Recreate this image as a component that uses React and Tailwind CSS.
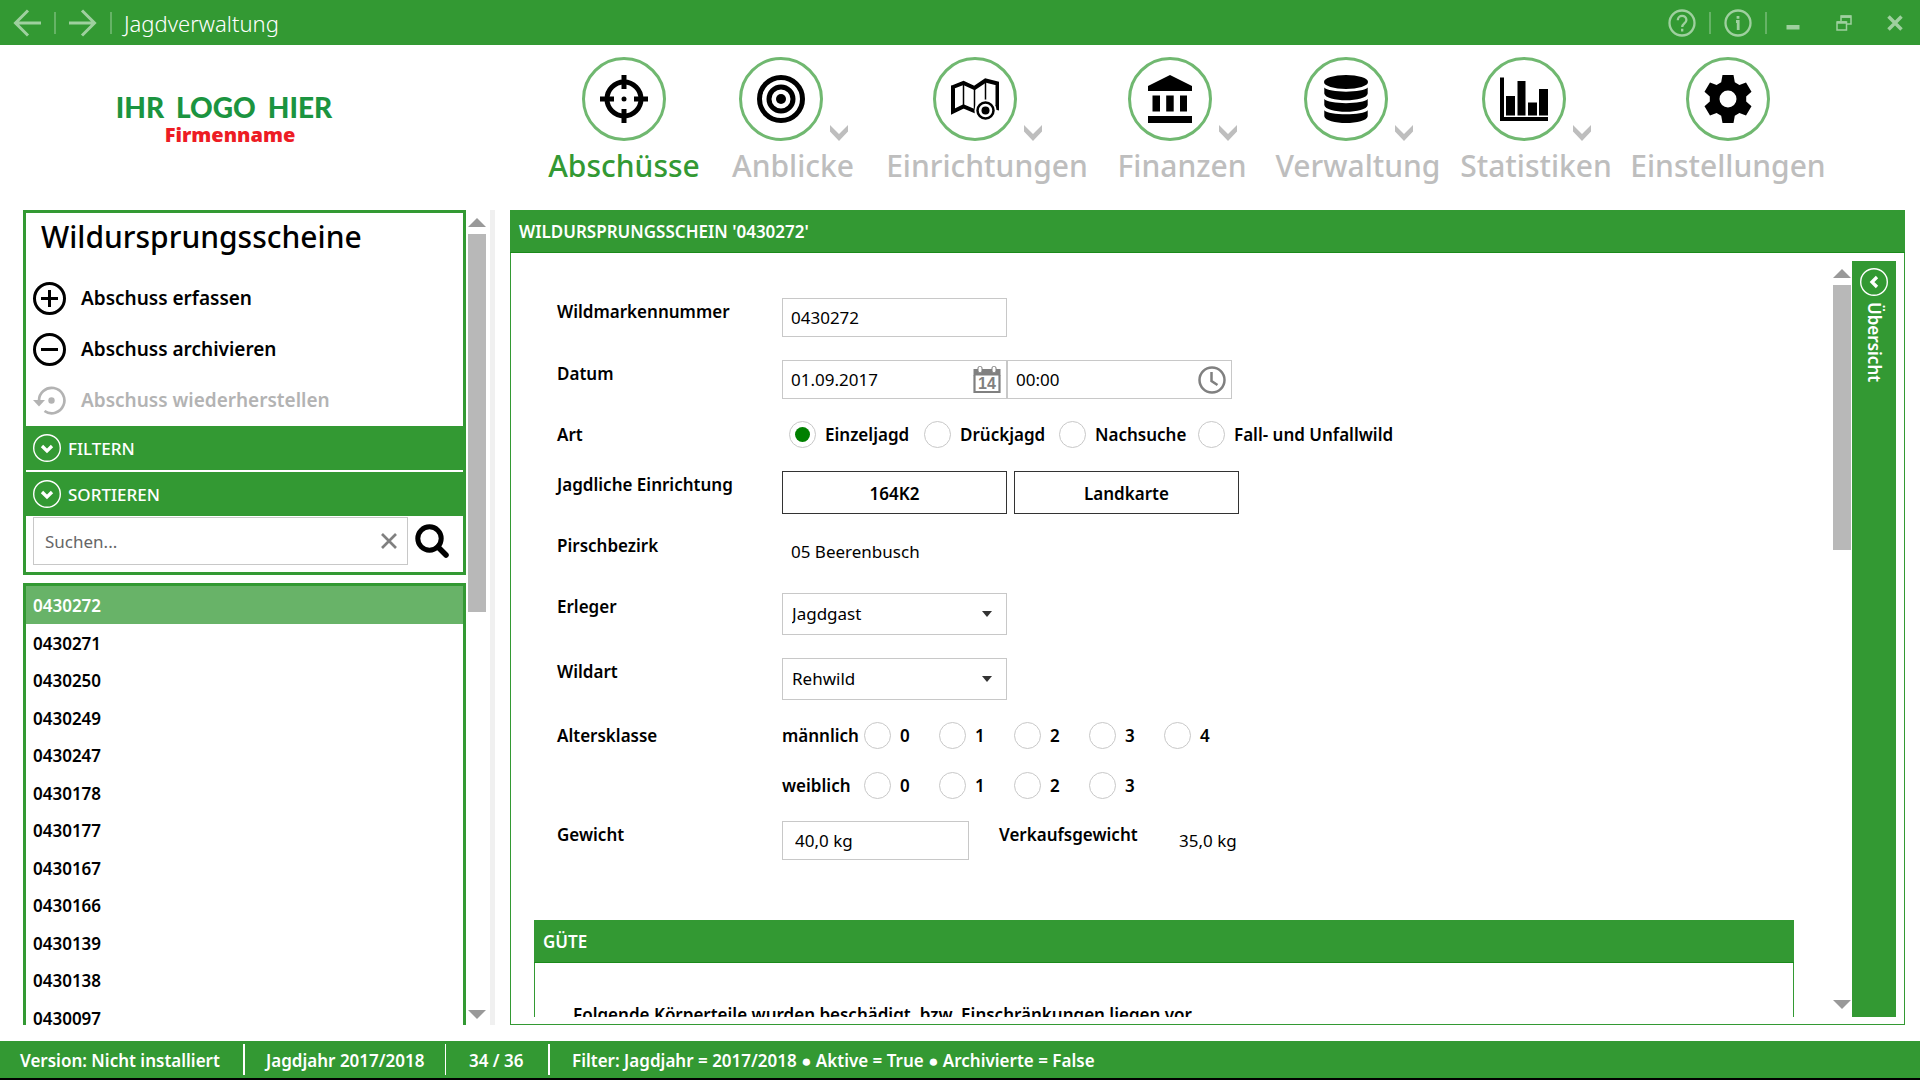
import React from "react";

const NAV = [
  { label: "Abschüsse", width: "w-[184px]", icon: "scope", active: true },
  { label: "Anblicke", width: "w-[154px]", icon: "target", menu: true },
  { label: "Einrichtungen", width: "w-[234px]", icon: "map", menu: true },
  { label: "Finanzen", width: "w-[156px]", icon: "bank", menu: true },
  { label: "Verwaltung", width: "w-[196px]", icon: "database", menu: true },
  { label: "Statistiken", width: "w-[160px]", icon: "chart", menu: true },
  { label: "Einstellungen", width: "w-[224px]", icon: "gear" },
];

const RECORDS = [
  "0430272", "0430271", "0430250", "0430249", "0430247", "0430178", "0430177",
  "0430167", "0430166", "0430139", "0430138", "0430097",
];

function NavIcon({ name }) {
  const box = { viewBox: "0 0 48 48", className: "size-12", "aria-hidden": true };
  switch (name) {
    case "scope":
      return (
        <svg {...box}>
          <circle cx="24" cy="24" r="17" fill="none" stroke="black" strokeWidth="5" />
          <path d="M24 0v14M24 34v14M0 24h14M34 24h14" stroke="black" strokeWidth="5" />
          <circle cx="24" cy="24" r="2.5" />
        </svg>
      );
    case "target":
      return (
        <svg {...box}>
          <circle cx="24" cy="24" r="21.5" fill="none" stroke="black" strokeWidth="5" />
          <circle cx="24" cy="24" r="12" fill="none" stroke="black" strokeWidth="5" />
          <circle cx="24" cy="24" r="5" />
        </svg>
      );
    case "map":
      return (
        <svg {...box}>
          <path d="M2 12L12.5 8 23.500 13 34.500 5.500 46.500 8.500V33L34.500 30 23.500 36 12.500 31.500 2 36.500Z" fill="none" stroke="black" strokeWidth="4" />
          <path d="M12.500 8v24M23.500 13v23M34.500 5v22" fill="none" stroke="black" strokeWidth="1.5" />
          <circle cx="34.5" cy="35.5" r="11" fill="white" />
          <circle cx="34.5" cy="35.5" r="8" fill="none" stroke="black" strokeWidth="2.5" />
          <circle cx="34.5" cy="35.5" r="4" />
        </svg>
      );
    case "bank":
      return (
        <svg {...box}>
          <path d="M2 11L24 0l22 11v5H2zM6.500 20.500h7.500v16H6.500zM20.200 20.500h7.500v16h-7.500zM34 20.500h7v16h-7zM2 41h44v7H2z" />
        </svg>
      );
    case "database":
      return (
        <svg {...box}>
          <ellipse cx="24" cy="7" rx="22" ry="7" />
          <path d="M2.300 12.500c4 5.500 39.400 5.500 43.400 0v6c-1 9-42.400 9-43.400 0zM2.300 24c4 5.500 39.400 5.500 43.400 0v6c-1 9-42.400 9-43.400 0zM2.300 35.200c4 5.500 39.400 5.500 43.400 0v6c-1 9-42.400 9-43.400 0z" />
        </svg>
      );
    case "chart":
      return (
        <svg {...box}>
          <path d="M0 2.500h4v39.500h44v4H0zM6 21h9v19.500H6zM17.500 6h8v34.500h-8zM28 27.500h9v13h-9zM39 14h9v26.500h-9z" />
        </svg>
      );
    default:
      return (
        <svg {...box}>
          <path
            fillRule="evenodd"
            d="M18.500 0h11l1.300 7.200 4.600 2.700 6.600-2.400 5.500 9.300-5.300 4.600v5.200l5.300 4.600-5.500 9.300-6.600-2.400-4.600 2.700L29.500 48h-11l-1.300-7.200-4.600-2.700L6 40.500.500 31.200l5.300-4.600v-5.200L.500 16.800 6 7.500l6.600 2.400 4.600-2.700zM24 15.500a8.500 8.500 0 1 0 0 17 8.500 8.500 0 0 0 0-17z"
          />
        </svg>
      );
  }
}

function TitleBar() {
  return (
    <header className="flex h-[45px] shrink-0 items-center bg-[#339933] text-[#9fd09f]">
      <button aria-label="Zurück" className="ml-[13px] size-7">
        <svg viewBox="0 0 28 28" fill="none" stroke="currentColor" strokeWidth="3">
          <path d="M28 14H3M15 1.500L2.500 14 15 26.500" />
        </svg>
      </button>
      <span className="ml-[13px] h-[22px] w-0.5 bg-[#66b366]" />
      <button aria-label="Vor" className="ml-[13px] size-7">
        <svg viewBox="0 0 28 28" fill="none" stroke="currentColor" strokeWidth="3">
          <path d="M0 14h25M13 1.500L25.500 14 13 26.500" />
        </svg>
      </button>
      <span className="ml-[13px] h-[22px] w-0.5 bg-[#66b366]" />
      <h1 className="ml-3 pt-0.5 text-[22px] font-light text-white">Jagdverwaltung</h1>
      <div className="ml-auto flex items-center">
        <button aria-label="Hilfe" className="size-7">
          <svg viewBox="0 0 28 28" fill="none" stroke="currentColor" strokeWidth="2.3">
            <circle cx="14" cy="14" r="12.5" />
            <path d="M9.800 11.200c0-5.600 8.600-5.600 8.600-.3 0 3.300-4.200 3.500-4.200 7M14.200 19.800v2.600" />
          </svg>
        </button>
        <span className="ml-[13px] h-[22px] w-0.5 bg-[#66b366]" />
        <button aria-label="Info" className="ml-[13px] size-7">
          <svg viewBox="0 0 28 28" fill="none" stroke="currentColor" strokeWidth="2.3">
            <circle cx="14" cy="14" r="12.5" />
            <path d="M12 12.500h2.200V21M14 7v2.800" strokeWidth="2.8" />
          </svg>
        </button>
        <span className="ml-[13px] h-[22px] w-0.5 bg-[#66b366]" />
        <button aria-label="Minimieren" className="ml-[10px] flex size-8 items-center justify-center">
          <svg viewBox="0 0 16 16" className="size-4" fill="currentColor"><path d="M1.500 10h13v4.500h-13z" /></svg>
        </button>
        <button aria-label="Wiederherstellen" className="ml-[19px] flex size-8 items-center justify-center">
          <svg viewBox="0 0 16 16" className="size-4" fill="none" stroke="currentColor" strokeWidth="1.5">
            <path d="M5 6V1h10v8h-5" />
            <path d="M5 1.700h10" strokeWidth="2.5" />
            <path d="M1 7h9.500v8H1z" />
            <path d="M1 7.500h9.500" strokeWidth="2.5" />
          </svg>
        </button>
        <button aria-label="Schließen" className="mr-[9px] ml-[19px] flex size-8 items-center justify-center">
          <svg viewBox="0 0 16 16" className="size-4" stroke="currentColor" strokeWidth="3.5">
            <path d="M1.500 1.500l13 13M14.500 1.500l-13 13" />
          </svg>
        </button>
      </div>
    </header>
  );
}

function MainNav() {
  return (
    <div className="flex h-[165px] shrink-0 justify-between">
      <div className="ml-[118px] flex w-[212px] flex-col items-center pt-[45px] whitespace-nowrap">
        <span className="flex gap-3 font-[Lato,sans-serif] text-[28px] leading-[34px] font-black text-[#1b9440]">
          <span>IHR</span>
          <span>LOGO</span>
          <span>HIER</span>
        </span>
        <span className="pl-3 font-['Open_Sans',sans-serif] text-[20px] leading-[22px] font-extrabold text-[#ed1c24]">Firmenname</span>
      </div>
      <nav className="mr-[80px] flex pt-3">
        {NAV.map((item) => (
          <button
            key={item.label}
            className={`flex flex-col items-center ${item.width} ${item.active ? "text-[#339933]" : "text-[#bebebe]"}`}
          >
            <span className="flex items-end">
              <span className="flex size-[84px] items-center justify-center rounded-full border-[3px] border-[#70b870]">
                <NavIcon name={item.icon} />
              </span>
              {item.menu && (
                <svg viewBox="0 0 18 16" className="ml-[7px] h-4 w-[18px]" fill="currentColor" aria-hidden="true">
                  <path d="M0 0l9 9 9-9v6.500L9 16 0 6.500z" />
                </svg>
              )}
            </span>
            <span className="mt-1 text-[30px] leading-[42px] font-medium">{item.label}</span>
          </button>
        ))}
      </nav>
    </div>
  );
}

function ScrollBar({ bottom, thumb }) {
  return (
    <div className="flex w-[18px] shrink-0 flex-col items-center" aria-hidden="true">
      <svg viewBox="0 0 18 9" className="mt-2 h-[9px] w-[18px]" fill="#999999"><path d="M9 0l9 9H0z" /></svg>
      <div className={`mt-[7px] w-full bg-[#b8b8b8] ${thumb}`} />
      <svg viewBox="0 0 18 9" className={`mt-auto h-[9px] w-[18px] ${bottom}`} fill="#999999"><path d="M0 0h18L9 9z" /></svg>
    </div>
  );
}

function CircleChevron({ left }) {
  return (
    <svg viewBox="0 0 28 28" className="size-7 shrink-0" fill="none" stroke="white" aria-hidden="true">
      <circle cx="14" cy="14" r="13.3" strokeWidth="1.4" />
      <path d={left ? "M17 9l-5 5 5 5" : "M9 12l5 5 5-5"} strokeWidth="3.3" />
    </svg>
  );
}

function Sidebar() {
  return (
    <aside className="flex w-[463px] shrink-0">
      <div className="flex min-w-0 flex-1 flex-col gap-2 overflow-hidden">
        <section className="shrink-0 border-[3px] border-[#339933] pb-[7px]">
          <h2 className="flex h-[60px] pl-[15px] text-[30px] leading-[48px] font-medium">Wildursprungsscheine</h2>
          <button className="flex h-[51px] w-full items-center gap-[15px] pl-[7px] text-[19px] font-semibold">
            <svg viewBox="0 0 33 33" className="size-[33px]" fill="none" stroke="black" strokeWidth="3">
              <circle cx="16.5" cy="16.5" r="15" />
              <path d="M8 16.500h17M16.500 8v17" />
            </svg>
            Abschuss erfassen
          </button>
          <button className="flex h-[51px] w-full items-center gap-[15px] pl-[7px] text-[19px] font-semibold">
            <svg viewBox="0 0 33 33" className="size-[33px]" fill="none" stroke="black" strokeWidth="3">
              <circle cx="16.5" cy="16.5" r="15" />
              <path d="M8 16.500h17" />
            </svg>
            Abschuss archivieren
          </button>
          <button disabled className="flex h-[51px] w-full items-center gap-[15px] pl-[7px] text-[19px] font-semibold text-[#b3b3b3]">
            <svg viewBox="0 0 33 33" className="size-[33px]" fill="none" stroke="currentColor" strokeWidth="2.7">
              <path d="M6 17A12.700 12.700 0 1 1 11.500 27" />
              <path d="M0 16h12L6 22.500z" fill="currentColor" stroke="none" />
              <circle cx="18.5" cy="16.5" r="3.2" fill="currentColor" stroke="none" />
            </svg>
            Abschuss wiederherstellen
          </button>
          <button className="flex h-11 w-full items-center gap-[7px] bg-[#339933] pl-[7px] text-[17px] font-medium text-white">
            <CircleChevron />
            <span className="pt-0.5">FILTERN</span>
          </button>
          <button className="mt-0.5 flex h-11 w-full items-center gap-[7px] bg-[#339933] pl-[7px] text-[17px] font-medium text-white">
            <CircleChevron />
            <span className="pt-0.5">SORTIEREN</span>
          </button>
          <div className="mt-px ml-[7px] flex items-center">
            <div className="flex h-12 w-[375px] items-center border border-[#c8c8c8] pr-[10px]">
              <input
                aria-label="Suchen"
                placeholder="Suchen..."
                className="min-w-0 flex-1 pt-0.5 pl-[11px] text-[17px] outline-none placeholder:text-[#666666]"
              />
              <button aria-label="Leeren">
                <svg viewBox="0 0 16 16" className="size-4" stroke="#808080" strokeWidth="2.7"><path d="M1 1l14 14M15 1L1 15" /></svg>
              </button>
            </div>
            <button aria-label="Suche starten" className="ml-[7px]">
              <svg viewBox="0 0 34 34" className="size-[34px]" fill="none" stroke="black">
                <circle cx="14.5" cy="14.5" r="11.7" strokeWidth="5" />
                <path d="M23 23l8 8" strokeWidth="5.5" strokeLinecap="round" />
              </svg>
            </button>
          </div>
        </section>
        <ul className="flex-1 border-x-[3px] border-t-[3px] border-[#339933] text-[17px] font-semibold">
          {RECORDS.map((id, i) => (
            <li key={id} className="h-[37px] odd:h-[38px]">
              <button className={`flex size-full items-center pt-0.5 pl-[7px] ${i === 0 ? "bg-[#68b368] text-white" : ""}`}>{id}</button>
            </li>
          ))}
        </ul>
      </div>
      <div className="w-0.5 shrink-0" />
      <ScrollBar thumb="h-[378px]" bottom="mb-[6px]" />
    </aside>
  );
}

function Row({ label, htmlFor, height, children }) {
  return (
    <div className={`flex items-start ${height}`}>
      <label htmlFor={htmlFor} className="w-[225px] shrink-0 pt-0.5 leading-6 font-semibold">{label}</label>
      {children}
    </div>
  );
}

function Radio({ name, label, checked, className }) {
  return (
    <label className={`flex h-[27px] items-center gap-[9px] font-semibold ${className}`}>
      <input
        type="radio"
        name={name}
        defaultChecked={checked}
        className="size-[27px] shrink-0 appearance-none rounded-full border border-[#c8c8c8] bg-white p-[5px] checked:bg-[#008000] checked:bg-clip-content"
      />
      {label}
    </label>
  );
}

function Select({ id, value }) {
  return (
    <div className="relative">
      <select id={id} className="h-[42px] w-[225px] appearance-none border border-[#c8c8c8] bg-white pl-[9px]" defaultValue={value}>
        <option>{value}</option>
      </select>
      <svg viewBox="0 0 10 6" className="pointer-events-none absolute top-[18px] right-[15px] h-[6px] w-[10px]" fill="#333333" aria-hidden="true">
        <path d="M0 0h10L5 6z" />
      </svg>
    </div>
  );
}

function Detail() {
  return (
    <main className="flex min-w-0 flex-1 flex-col border border-[#339933]">
      <h2 className="-m-px mb-0 flex h-[43px] shrink-0 items-center border-b border-[#1a8a1a] bg-[#339933] pt-0.5 pl-[9px] text-[17px] font-semibold text-white">
        WILDURSPRUNGSSCHEIN '0430272'
      </h2>
      <div className="flex min-h-0 flex-1 pt-2 pr-2 pb-[7px]">
        <div className="flex min-w-0 flex-1 flex-col overflow-hidden pr-[39px] pl-[23px] text-[17px]">
          <form className="flex shrink-0 flex-col pt-[37px] pl-[23px]">
            <Row label="Wildmarkennummer" htmlFor="marke" height="h-[62px]">
              <input id="marke" defaultValue="0430272" className="h-[39px] w-[225px] border border-[#c8c8c8] px-2" />
            </Row>
            <Row label="Datum" htmlFor="datum" height="h-[61px]">
              <div className="flex h-[39px] w-[225px] items-center border border-[#c8c8c8] pr-[5px]">
                <input id="datum" defaultValue="01.09.2017" className="min-w-0 flex-1 px-2" />
                <button type="button" aria-label="Kalender">
                  <svg viewBox="0 0 28 28" className="size-7" aria-hidden="true">
                    <path d="M1.500 9v17h25V9" fill="none" stroke="#808080" strokeWidth="2.2" />
                    <path d="M.500 3h27v6.500H.500z" fill="#808080" />
                    <rect x="5" y="0.5" width="4" height="6" rx="1.5" fill="white" stroke="#808080" />
                    <rect x="19" y="0.5" width="4" height="6" rx="1.5" fill="white" stroke="#808080" />
                    <text x="14" y="23" textAnchor="middle" fontSize="16" fontWeight="700" fontFamily="Liberation Sans, sans-serif" fill="#808080">14</text>
                  </svg>
                </button>
              </div>
              <div className="flex h-[39px] w-[225px] items-center border border-[#c8c8c8] pr-[5px]">
                <input aria-label="Uhrzeit" defaultValue="00:00" className="min-w-0 flex-1 px-2" />
                <button type="button" aria-label="Uhr">
                  <svg viewBox="0 0 28 28" className="size-7" fill="none" stroke="#808080" strokeWidth="2.5" aria-hidden="true">
                    <circle cx="14" cy="14" r="12.5" />
                    <path d="M13.500 6v9l6 4" />
                  </svg>
                </button>
              </div>
            </Row>
            <Row label="Art" height="h-[50px]">
              <div className="flex pl-[7px]">
                <Radio name="art" label="Einzeljagd" checked className="w-[135px]" />
                <Radio name="art" label="Drückjagd" className="w-[135px]" />
                <Radio name="art" label="Nachsuche" className="w-[139px]" />
                <Radio name="art" label="Fall- und Unfallwild" className="whitespace-nowrap" />
              </div>
            </Row>
            <Row label="Jagdliche Einrichtung" height="h-[61px]">
              <div className="flex gap-[7px] font-semibold">
                <button type="button" className="h-[43px] w-[225px] border border-[#333333] pt-0.5">164K2</button>
                <button type="button" className="h-[43px] w-[225px] border border-[#333333] pt-0.5">Landkarte</button>
              </div>
            </Row>
            <Row label="Pirschbezirk" height="h-[61px]">
              <span className="pl-[9px] leading-10">05 Beerenbusch</span>
            </Row>
            <Row label="Erleger" htmlFor="erleger" height="h-[65px]">
              <Select id="erleger" value="Jagdgast" />
            </Row>
            <Row label="Wildart" htmlFor="wildart" height="h-[64px]">
              <Select id="wildart" value="Rehwild" />
            </Row>
            <Row label="Altersklasse" height="h-[50px]">
              <span className="w-[82px] pt-0.5 leading-6 font-semibold">männlich</span>
              {["0", "1", "2", "3", "4"].map((n) => (
                <Radio key={n} name="klasse" label={n} className="w-[75px]" />
              ))}
            </Row>
            <Row label="" height="h-[49px]">
              <span className="w-[82px] pt-0.5 leading-6 font-semibold">weiblich</span>
              {["0", "1", "2", "3"].map((n) => (
                <Radio key={n} name="klasse" label={n} className="w-[75px]" />
              ))}
            </Row>
            <Row label="Gewicht" htmlFor="gewicht" height="h-[99px]">
              <input id="gewicht" defaultValue="40,0 kg" className="h-[39px] w-[187px] border border-[#c8c8c8] px-3" />
              <span className="w-[210px] pt-0.5 pl-[30px] leading-6 font-semibold">Verkaufsgewicht</span>
              <span className="leading-[39px]">35,0 kg</span>
            </Row>
          </form>
          <section className="flex-1 border-x border-[#339933]">
            <h3 className="-mx-px flex h-[43px] items-center border-b border-[#1a8a1a] bg-[#339933] pt-0.5 pl-[9px] font-semibold text-white">GÜTE</h3>
            <p className="pt-[40px] pl-[38px] leading-6 font-semibold">
              Folgende Körperteile wurden beschädigt, bzw. Einschränkungen liegen vor
            </p>
          </section>
        </div>
        <ScrollBar thumb="h-[265px]" bottom="mb-2" />
        <button className="ml-px flex w-11 shrink-0 flex-col items-center bg-[#339933] pt-[7px] text-[17px] font-semibold text-white">
          <CircleChevron left />
          <span className="mt-1.5 [writing-mode:vertical-rl]">Übersicht</span>
        </button>
      </div>
    </main>
  );
}

function StatusBar() {
  return (
    <footer className="flex h-[39px] shrink-0 items-center border-b-2 border-black bg-[#339933] pl-5 text-[17px] font-semibold whitespace-nowrap text-white">
      <span className="w-[223px] pt-0.5">Version: Nicht installiert</span>
      <span className="h-[31px] w-0.5 bg-white" />
      <span className="w-[200px] pt-0.5 pl-[21px]">Jagdjahr 2017/2018</span>
      <span className="h-[31px] w-px bg-white" />
      <span className="w-[102px] pt-0.5 pl-[23px]">34 / 36</span>
      <span className="h-[31px] w-0.5 bg-white" />
      <span className="pt-0.5 pl-[22px]">Filter: Jagdjahr = 2017/2018 ● Aktive = True ● Archivierte = False</span>
    </footer>
  );
}

export default function App() {
  return (
    <div className="flex h-screen flex-col overflow-hidden bg-white font-['Noto_Sans','Open_Sans',sans-serif] text-black">
      <TitleBar />
      <MainNav />
      <div className="mb-4 flex min-h-0 flex-1 pr-[15px] pl-[23px]">
        <Sidebar />
        <div className="mr-[15px] ml-1 w-[5px] shrink-0 bg-[#f0f0f0]" />
        <Detail />
      </div>
      <StatusBar />
    </div>
  );
}
